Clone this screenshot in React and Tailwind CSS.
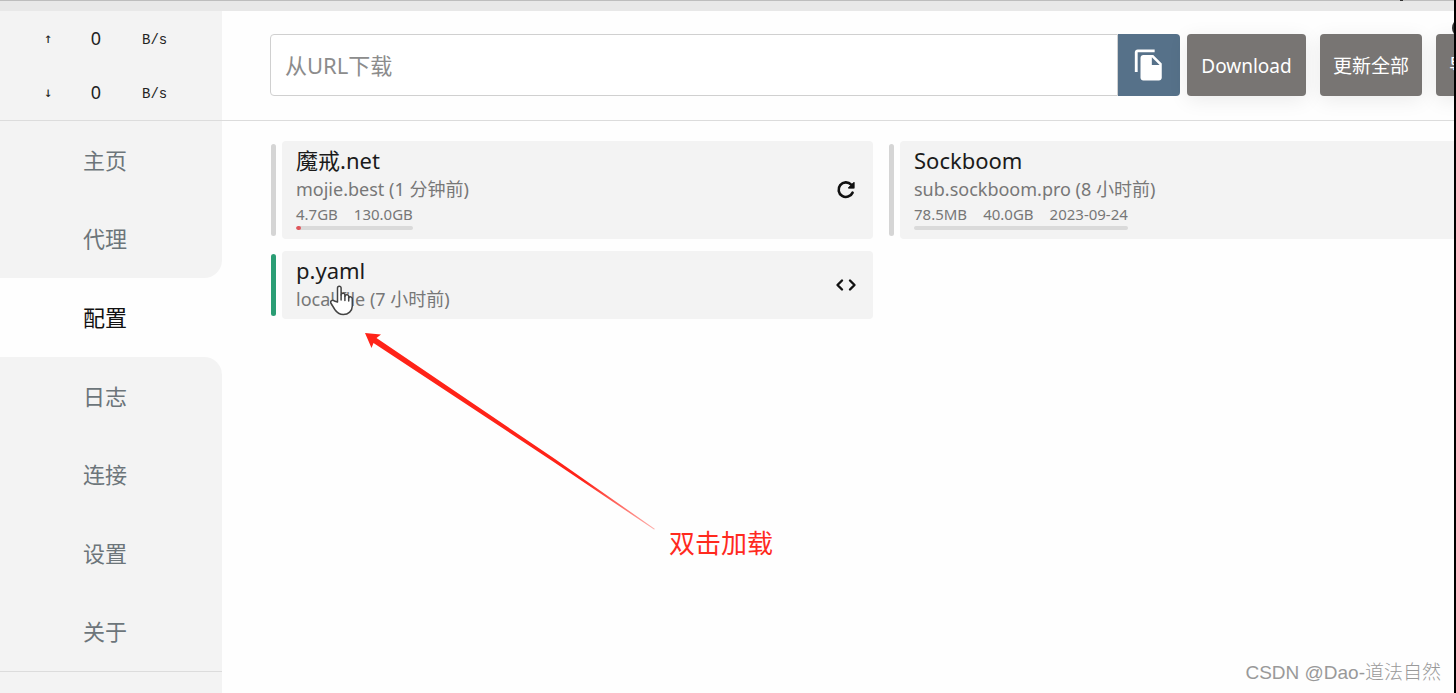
import React, { useState } from 'react'
import { MdFileCopy } from 'react-icons/md'

const tabs = ['主页', '代理', '配置', '日志', '连接', '设置', '关于']

const profiles = [
  { name: '魔戒.net', host: 'mojie.best (1 分钟前)', stats: ['4.7GB', '130.0GB'], used: 4, icon: 'refresh' },
  { name: 'Sockboom', host: 'sub.sockboom.pro (8 小时前)', stats: ['78.5MB', '40.0GB', '2023-09-24'], used: 0, icon: 'refresh' },
  { name: 'p.yaml', host: 'local file (7 小时前)', icon: 'code' },
]

function CodeIcon() {
  return (
    <svg width="24" height="24" viewBox="0 0 24 24" fill="none" stroke="currentColor" strokeWidth="2.4" strokeLinecap="round" strokeLinejoin="round">
      <path d="M8 7.500 3.500 12 8 16.500M16 7.500 20.500 12 16 16.500" />
    </svg>
  )
}

function RefreshIcon() {
  return (
    <svg width="24" height="24" viewBox="0 0 24 24" fill="none" stroke="currentColor" strokeWidth="2.600" strokeLinecap="round">
      <path d="M17.200 6.600A7.300 7.300 0 1 0 18.600 14.600" />
      <path d="M20.500 4v6.500h-6.500z" fill="currentColor" stroke="none" />
      <path d="M19.800 4.800v5h-5z" fill="currentColor" strokeWidth="1" strokeLinejoin="round" />
    </svg>
  )
}

function Speed({ arrow }) {
  return (
    <div className="flex h-[54px] items-center text-[#222]">
      <span className="w-24 text-center font-['DejaVu_Sans_Mono'] text-sm">{arrow}</span>
      <span className="flex w-0 justify-center text-lg">0</span>
      <span className="ml-[46px] pt-1 font-['Liberation_Mono',monospace] text-sm">B/s</span>
    </div>
  )
}

function Sidebar({ active, onSelect }) {
  const pos = tabs.indexOf(active)
  return (
    <aside className="flex w-[222px] shrink-0 flex-col bg-[#fefefe]">
      <div className="h-[110px] border-b border-[#dcdcdc] bg-[#f3f3f3]">
        <Speed arrow="↑" />
        <Speed arrow="↓" />
      </div>
      <nav className="flex flex-1 flex-col">
        {tabs.map((t, i) => (
          <button
            key={t}
            onClick={() => onSelect(t)}
            className={'flex-1 pr-3 text-[22px] ' + (i === pos ? 'text-[#111]' : 'bg-[#f3f3f3] text-[#6c757a]') + (i === pos - 1 ? ' rounded-br-[18px]' : '') + (i === pos + 1 ? ' rounded-tr-[18px]' : '')}
          >
            {t}
          </button>
        ))}
      </nav>
      <div className="h-[22px] border-t border-[#dcdcdc] bg-[#f3f3f3]" />
    </aside>
  )
}

function Toolbar() {
  const [url, setUrl] = useState('')
  const btn = 'h-[62px] shrink-0 rounded-[4px] bg-[#787573] pt-[2px] text-[19px] text-white shadow-[0_4px_20px_rgba(0,0,0,0.08)]'
  return (
    <div className="h-[110px] border-b border-[#dcdcdc] pt-[23px] pl-12">
      <div className="-mr-[84px] flex gap-[14px]">
        <div className="flex flex-1 gap-[7px]">
          <div className="flex flex-1">
            <input
              aria-label="从URL下载"
              value={url}
              onChange={e => setUrl(e.target.value)}
              placeholder="从URL下载"
              className="h-[62px] min-w-0 flex-1 rounded-l-[4px] border border-[#d0d0d0] bg-white px-[14px] text-[22px] placeholder:text-[#8c8c8c]"
            />
            <button aria-label="粘贴" className="flex h-[62px] w-[62px] items-center justify-center rounded-r-[4px] bg-[#567189] text-white">
              <MdFileCopy size={34} />
            </button>
          </div>
          <button className={btn + ' w-[119px]'}>Download</button>
        </div>
        <button className={btn + ' w-[102px]'}>更新全部</button>
        <button className={btn + ' w-[102px]'}>导出全部</button>
      </div>
    </div>
  )
}

function Profile({ p, selected, onSelect }) {
  return (
    <div className="flex gap-[6px]" onDoubleClick={onSelect}>
      <div className={'my-[3px] w-[5px] rounded-full ' + (selected ? 'bg-[#2a9d74]' : 'bg-[#d5d5d5]')} />
      <div className="flex flex-1 items-center justify-between rounded-[4px] bg-[#f3f3f3] pr-[15px] pl-[14px]">
        <div className={p.stats ? 'h-[98px] pt-1' : 'h-[68px] pt-1'}>
          <h2 className="text-[22px] leading-[30px] text-[#1b1b1b]">{p.name}</h2>
          <p className="text-[18px] leading-[28px] text-[#777]">{p.host}</p>
          {p.stats && (
            <div className="w-fit">
              <div className="flex gap-4 text-[15px] leading-[22px] text-[#777]">
                {p.stats.map(s => <span key={s}>{s}</span>)}
              </div>
              <div className="mt-px h-1 overflow-hidden rounded-full bg-[#dadada]">
                <div className="h-full rounded-full bg-[#e0565b]" style={{ width: p.used + '%' }} />
              </div>
            </div>
          )}
        </div>
        <button aria-label={p.icon} className="text-[#111]">
          {p.icon === 'code' ? <CodeIcon /> : <RefreshIcon />}
        </button>
      </div>
    </div>
  )
}

export default function App() {
  const [tab, setTab] = useState('配置')
  const [current, setCurrent] = useState('p.yaml')
  return (
    <div className="relative flex h-screen flex-col overflow-hidden border-r-2 border-black bg-[#fefefe] font-['Noto_Sans','Noto_Sans_CJK_SC',sans-serif]">
      <div className="h-[11px] shrink-0 border-t border-[#bdbdbd] bg-[#e8e8e8]" />
      <div className="flex flex-1">
        <Sidebar active={tab} onSelect={setTab} />
        <main className="min-w-0 flex-1 overflow-hidden">
          <Toolbar />
          <div className="-mr-[37px] grid grid-cols-2 gap-x-4 gap-y-3 pt-5 pl-[49px]">
            {profiles.map(p => <Profile key={p.name} p={p} selected={p.name === current} onSelect={() => setCurrent(p.name)} />)}
          </div>
        </main>
      </div>

      {/* window edge marks */}
      <div className="absolute top-0 right-[51px] h-px w-[3px] bg-[#333]" />
      <div className="absolute top-[18px] -right-[18px] size-5 rounded-full bg-[#333]" />

      {/* hand cursor */}
      <svg className="absolute top-[284px] left-[330px]" width="24" height="32" viewBox="0 0 24 32" fill="#fff" stroke="#444" strokeWidth="1.500" strokeLinejoin="round" strokeLinecap="round">
        <path d="M7.500 18V4a1.800 1.800 0 0 1 3.600 0v7a1.900 1.900 0 0 1 3.800 .5v.8a1.900 1.900 0 0 1 3.800 .8v.8a1.900 1.900 0 0 1 3.600 1V22c0 5-4 8.500-9 8.500-4 0-6.500-2-8.500-5l-4-6.500c-1-2 2-3.500 3.500-2z" />
        <path d="M11.100 11v5M14.900 12v4.500M18.700 13.500v3.500" />
      </svg>

      {/* arrow pointing at the profile */}
      <svg className="absolute top-[333px] left-[365px]" width="290" height="197" viewBox="0 0 290 197">
        <defs>
          <linearGradient id="fade" x1="0" y1="0" x2="1" y2="1">
            <stop offset="0.75" stopColor="#ff2318" />
            <stop offset="1" stopColor="#ff2318" stopOpacity="0.35" />
          </linearGradient>
        </defs>
        <path d="M0 0 16 1.500 11.500 5 190 126 290 196 289 196.500 188 128.500 8.500 10 6.500 15z" fill="url(#fade)" />
      </svg>
      <p className="absolute top-[524px] left-[669px] text-[26px] leading-[38px] text-[#ff2a1e]">双击加载</p>
      <p className="absolute right-[13px] bottom-[6px] font-['Liberation_Sans','Noto_Sans_CJK_SC',sans-serif] text-[19px] leading-[28px] font-light text-[#999]">CSDN @Dao-道法自然</p>
    </div>
  )
}
